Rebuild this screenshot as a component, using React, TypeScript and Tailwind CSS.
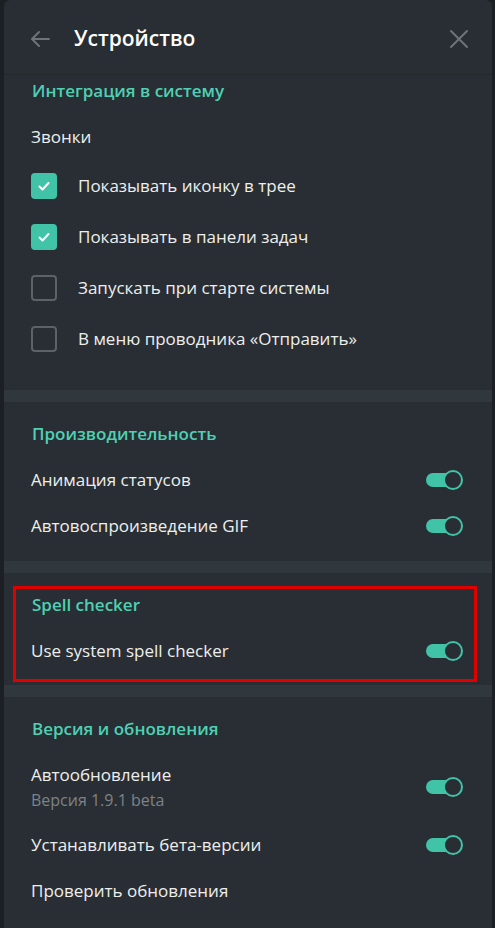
import React from "react";

const font = { fontFamily: '"Open Sans", "Noto Sans", sans-serif' };

function Check({ on }: { on?: boolean }) {
  if (on)
    return (
      <span className="flex h-[26px] w-[26px] shrink-0 items-center justify-center rounded-[4px] bg-[#41c3a8]">
        <svg width="16" height="16" viewBox="0 0 16 16" fill="none">
          <path d="M3.5 8.5l3 3 6-6.5" stroke="#fff" strokeWidth="2" strokeLinecap="round" strokeLinejoin="round" />
        </svg>
      </span>
    );
  return <span className="h-[26px] w-[26px] shrink-0 rounded-[4px] border-2 border-[#5c6267]" />;
}

function Toggle() {
  return (
    <span className="relative flex h-[20px] w-[37px] shrink-0 items-center">
      <span className="h-[14px] w-[30px] rounded-full bg-[#41c3a8]" />
      <span className="absolute right-0 top-0 h-[20px] w-[20px] rounded-full border-[2.5px] border-[#41c3a8] bg-[#282e33]" />
    </span>
  );
}

function Heading({ children }: { children: React.ReactNode }) {
  return (
    <div className="flex h-[32px] items-center px-[28px] text-[17px] font-semibold text-[#4fd0b3]">{children}</div>
  );
}

function ToggleRow({ label }: { label: string }) {
  return (
    <div className="flex h-[46px] items-center justify-between pl-[27px] pr-[29px] text-[17px] text-[#eeeeee]">
      <span>{label}</span>
      <Toggle />
    </div>
  );
}

function CheckRow({ label, on }: { label: string; on?: boolean }) {
  return (
    <div className="flex h-[51px] items-center gap-[21px] pl-[27px] text-[17px] text-[#eeeeee]">
      <Check on={on} />
      <span>{label}</span>
    </div>
  );
}

const Sep = () => <div className="h-[12px] bg-[#30383e]" />;

export default function App() {
  return (
    <div className="min-h-[928px] w-[495px] bg-[#1c2024]" style={font}>
      <div className="ml-[4px] h-[928px] w-[488px] overflow-hidden rounded-t-[6px] bg-[#282e33]">
        <div className="flex h-[75px] items-center border-b border-[#23292d] pl-[24px] pr-[22px]">
          <svg width="24" height="24" viewBox="0 0 24 24" fill="none" className="mt-[4px]">
            <path d="M21 12H4M11 5l-7 7 7 7" stroke="#6d7378" strokeWidth="2" strokeLinecap="round" strokeLinejoin="round" />
          </svg>
          <span className="ml-[22px] mt-[3px] text-[21px] font-semibold text-white">Устройство</span>
          <svg width="22" height="22" viewBox="0 0 22 22" fill="none" className="ml-auto mt-[4px]">
            <path d="M3 3l16 16M19 3L3 19" stroke="#6d7378" strokeWidth="2" strokeLinecap="round" />
          </svg>
        </div>

        <div className="pb-[26px]">
          <Heading>Интеграция в систему</Heading>
          <div className="mt-[7px] flex h-[46px] items-center pl-[27px] text-[17px] text-[#eeeeee]">Звонки</div>
          <CheckRow on label="Показывать иконку в трее" />
          <CheckRow on label="Показывать в панели задач" />
          <CheckRow label="Запускать при старте системы" />
          <CheckRow label="В меню проводника «Отправить»" />
        </div>
        <Sep />

        <div className="pb-[12px] pt-[16px]">
          <Heading>Производительность</Heading>
          <div className="mt-[7px]">
            <ToggleRow label="Анимация статусов" />
            <ToggleRow label="Автовоспроизведение GIF" />
          </div>
        </div>
        <Sep />

        <div className="relative pb-[11px] pt-[16px]">
          <Heading>Spell checker</Heading>
          <div className="mt-[7px]">
            <ToggleRow label="Use system spell checker" />
          </div>
          <div className="pointer-events-none absolute left-[9px] top-[13px] h-[96px] w-[464px] border-[3px] border-[#e00000]" />
        </div>
        <Sep />

        <div className="pt-[16px]">
          <Heading>Версия и обновления</Heading>
          <div className="mt-[7px] flex h-[70px] items-center justify-between pl-[27px] pr-[29px]">
            <div className="flex flex-col gap-[3px]">
              <span className="text-[17px] leading-[22px] text-[#eeeeee]">Автообновление</span>
              <span className="text-[16px] leading-[22px] text-[#7d8388]">Версия 1.9.1 beta</span>
            </div>
            <Toggle />
          </div>
          <ToggleRow label="Устанавливать бета-версии" />
          <div className="flex h-[46px] items-center pl-[27px] text-[17px] text-[#eeeeee]">Проверить обновления</div>
        </div>
      </div>
    </div>
  );
}
